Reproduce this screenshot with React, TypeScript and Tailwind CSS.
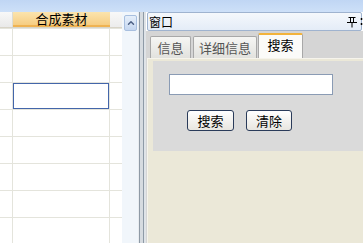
import { ChevronUp } from 'lucide-react';

const rows = [27, 27, 27, 27, 27, 27, 27, 27];

function GridPane() {
  return (
    <div className="w-[122px] flex flex-col bg-white">
      {/* header */}
      <div className="flex h-[21px] border-b border-[#d8d4c8]">
        <div className="w-[13px] bg-gradient-to-b from-[#f8f8f8] to-[#e9e9e9] border-r border-[#dcdcd4]" />
        <div className="w-[97px] flex items-center justify-center bg-gradient-to-b from-[#fbe4ae] to-[#f6cd82] border-b-2 border-[#efb352] text-[13px] text-black">
          合成素材
        </div>
        <div className="flex-1 bg-gradient-to-b from-[#f8f8f8] to-[#ececec]" />
      </div>
      <div className="flex h-[19px] border-b border-[#e4e4dc]">
        <div className="w-[13px] border-r border-[#e4e4dc]" />
        <div className="w-[97px] border-r border-[#e4e4dc]" />
      </div>
      {rows.map((h, i) => (
        <div key={i} className="flex h-[27px] shrink-0 border-b border-[#e4e4dc]">
          <div className="w-[13px] border-r border-[#e4e4dc]" />
          <div className="w-[97px] border-r border-[#e4e4dc]">
            {i === 2 && <div className="h-[26px] border border-[#4466aa]" />}
          </div>
        </div>
      ))}
    </div>
  );
}

function ScrollBar() {
  return (
    <div className="w-[16px] bg-[#f1f6fb] pt-[3px] pl-[2px]">
      <div className="w-[13px] h-[16px] flex items-center justify-center bg-gradient-to-b from-[#e6effa] to-[#c4d6f0] border border-[#a8bfdf] rounded-[2px]">
        <ChevronUp className="w-[10px] h-[10px] text-[#4d6185]" strokeWidth={3.5} />
      </div>
    </div>
  );
}

function Divider() {
  return (
    <div className="flex w-[8px]">
      <div className="w-[1px] bg-[#e8ecf0]" />
      <div className="w-[1px] bg-[#8e9aa6]" />
      <div className="w-[3px] bg-[#d6dbe0]" />
      <div className="w-[1px] bg-[#8e9aa6]" />
      <div className="w-[2px] bg-[#dfe3e7]" />
    </div>
  );
}

function Tab({ label, width, active }: { label: string; width: string; active?: boolean }) {
  if (active) {
    return (
      <div className={`${width} h-[25px] flex justify-center pt-[3px] bg-[#fbfbf9] border-t-2 border-[#f2b33c] border-x border-x-[#a8a8a8] rounded-t-[2px] text-[13px] text-black`}>
        {label}
      </div>
    );
  }
  return (
    <div className={`${width} h-[22px] flex items-center justify-center bg-gradient-to-b from-[#f6f6f4] to-[#e2e2de] border border-b-0 border-[#a8a8a8] rounded-t-[2px] text-[13px] text-[#555]`}>
      {label}
    </div>
  );
}

function PinIcon() {
  return (
    <svg width="16" height="12" viewBox="0 0 16 12" className="mr-[-2px]">
      <g fill="none" stroke="#000" strokeWidth="1">
        <path d="M1.5 1.5h7M3.5 1.5v5M6.5 1.5v5M0 6.5h10M5 6.5v5" />
        <path d="M14.5 2v2M14.5 7v2" strokeWidth="1.5" />
      </g>
    </svg>
  );
}

function WindowPane() {
  return (
    <div className="flex-1 flex flex-col">
      <div className="h-[19px] mx-[1px] flex items-center justify-between pl-[1px] border border-[#9fb3cf] rounded-[2px] bg-gradient-to-b from-[#f5f8fc] to-[#e4ecf7] text-[12px] text-black">
        <span>窗口</span>
        <PinIcon />
      </div>
      <div className="h-[27px] flex items-end pl-[4px] bg-[#d5d5d5]">
        <Tab label="信息" width="w-[41px]" />
        <div className="w-[2px]" />
        <Tab label="详细信息" width="w-[64px]" />
        <div className="w-[1px]" />
        <Tab label="搜索" width="w-[45px]" active />
      </div>
      <div className="flex-1 flex bg-[#d5d5d5]">
        <div className="flex-1 ml-[1px] bg-[#ebe8d8] border-t border-l border-[#f6f4ec] pl-[5px] pt-[2px]">
          <div className="h-[90px] bg-[#dadada] pt-[13px] pl-[16px]">
            <div className="w-[164px] h-[21px] bg-white border border-[#8a9bb4]" />
            <div className="flex gap-[12px] mt-[15px] pl-[18px]">
              <button className="w-[47px] h-[21px] flex items-center justify-center border border-[#2a3b5a] rounded-[3px] bg-gradient-to-b from-[#ffffff] to-[#e8e6e0] text-[13px] text-black">
                搜索
              </button>
              <button className="w-[46px] h-[21px] flex items-center justify-center border border-[#2a3b5a] rounded-[3px] bg-gradient-to-b from-[#ffffff] to-[#e8e6e0] text-[13px] text-black">
                清除
              </button>
            </div>
          </div>
        </div>
      </div>
    </div>
  );
}

export default function App() {
  return (
    <div className="w-[363px] h-[243px] overflow-hidden flex flex-col bg-white font-['Noto_Sans_CJK_SC',sans-serif] leading-none">
      <div className="h-[12px] shrink-0 bg-gradient-to-b from-[#c0d6f4] to-[#cde0f8]" />
      <div className="flex flex-1 min-h-0">
        <GridPane />
        <ScrollBar />
        <Divider />
        <WindowPane />
      </div>
    </div>
  );
}
